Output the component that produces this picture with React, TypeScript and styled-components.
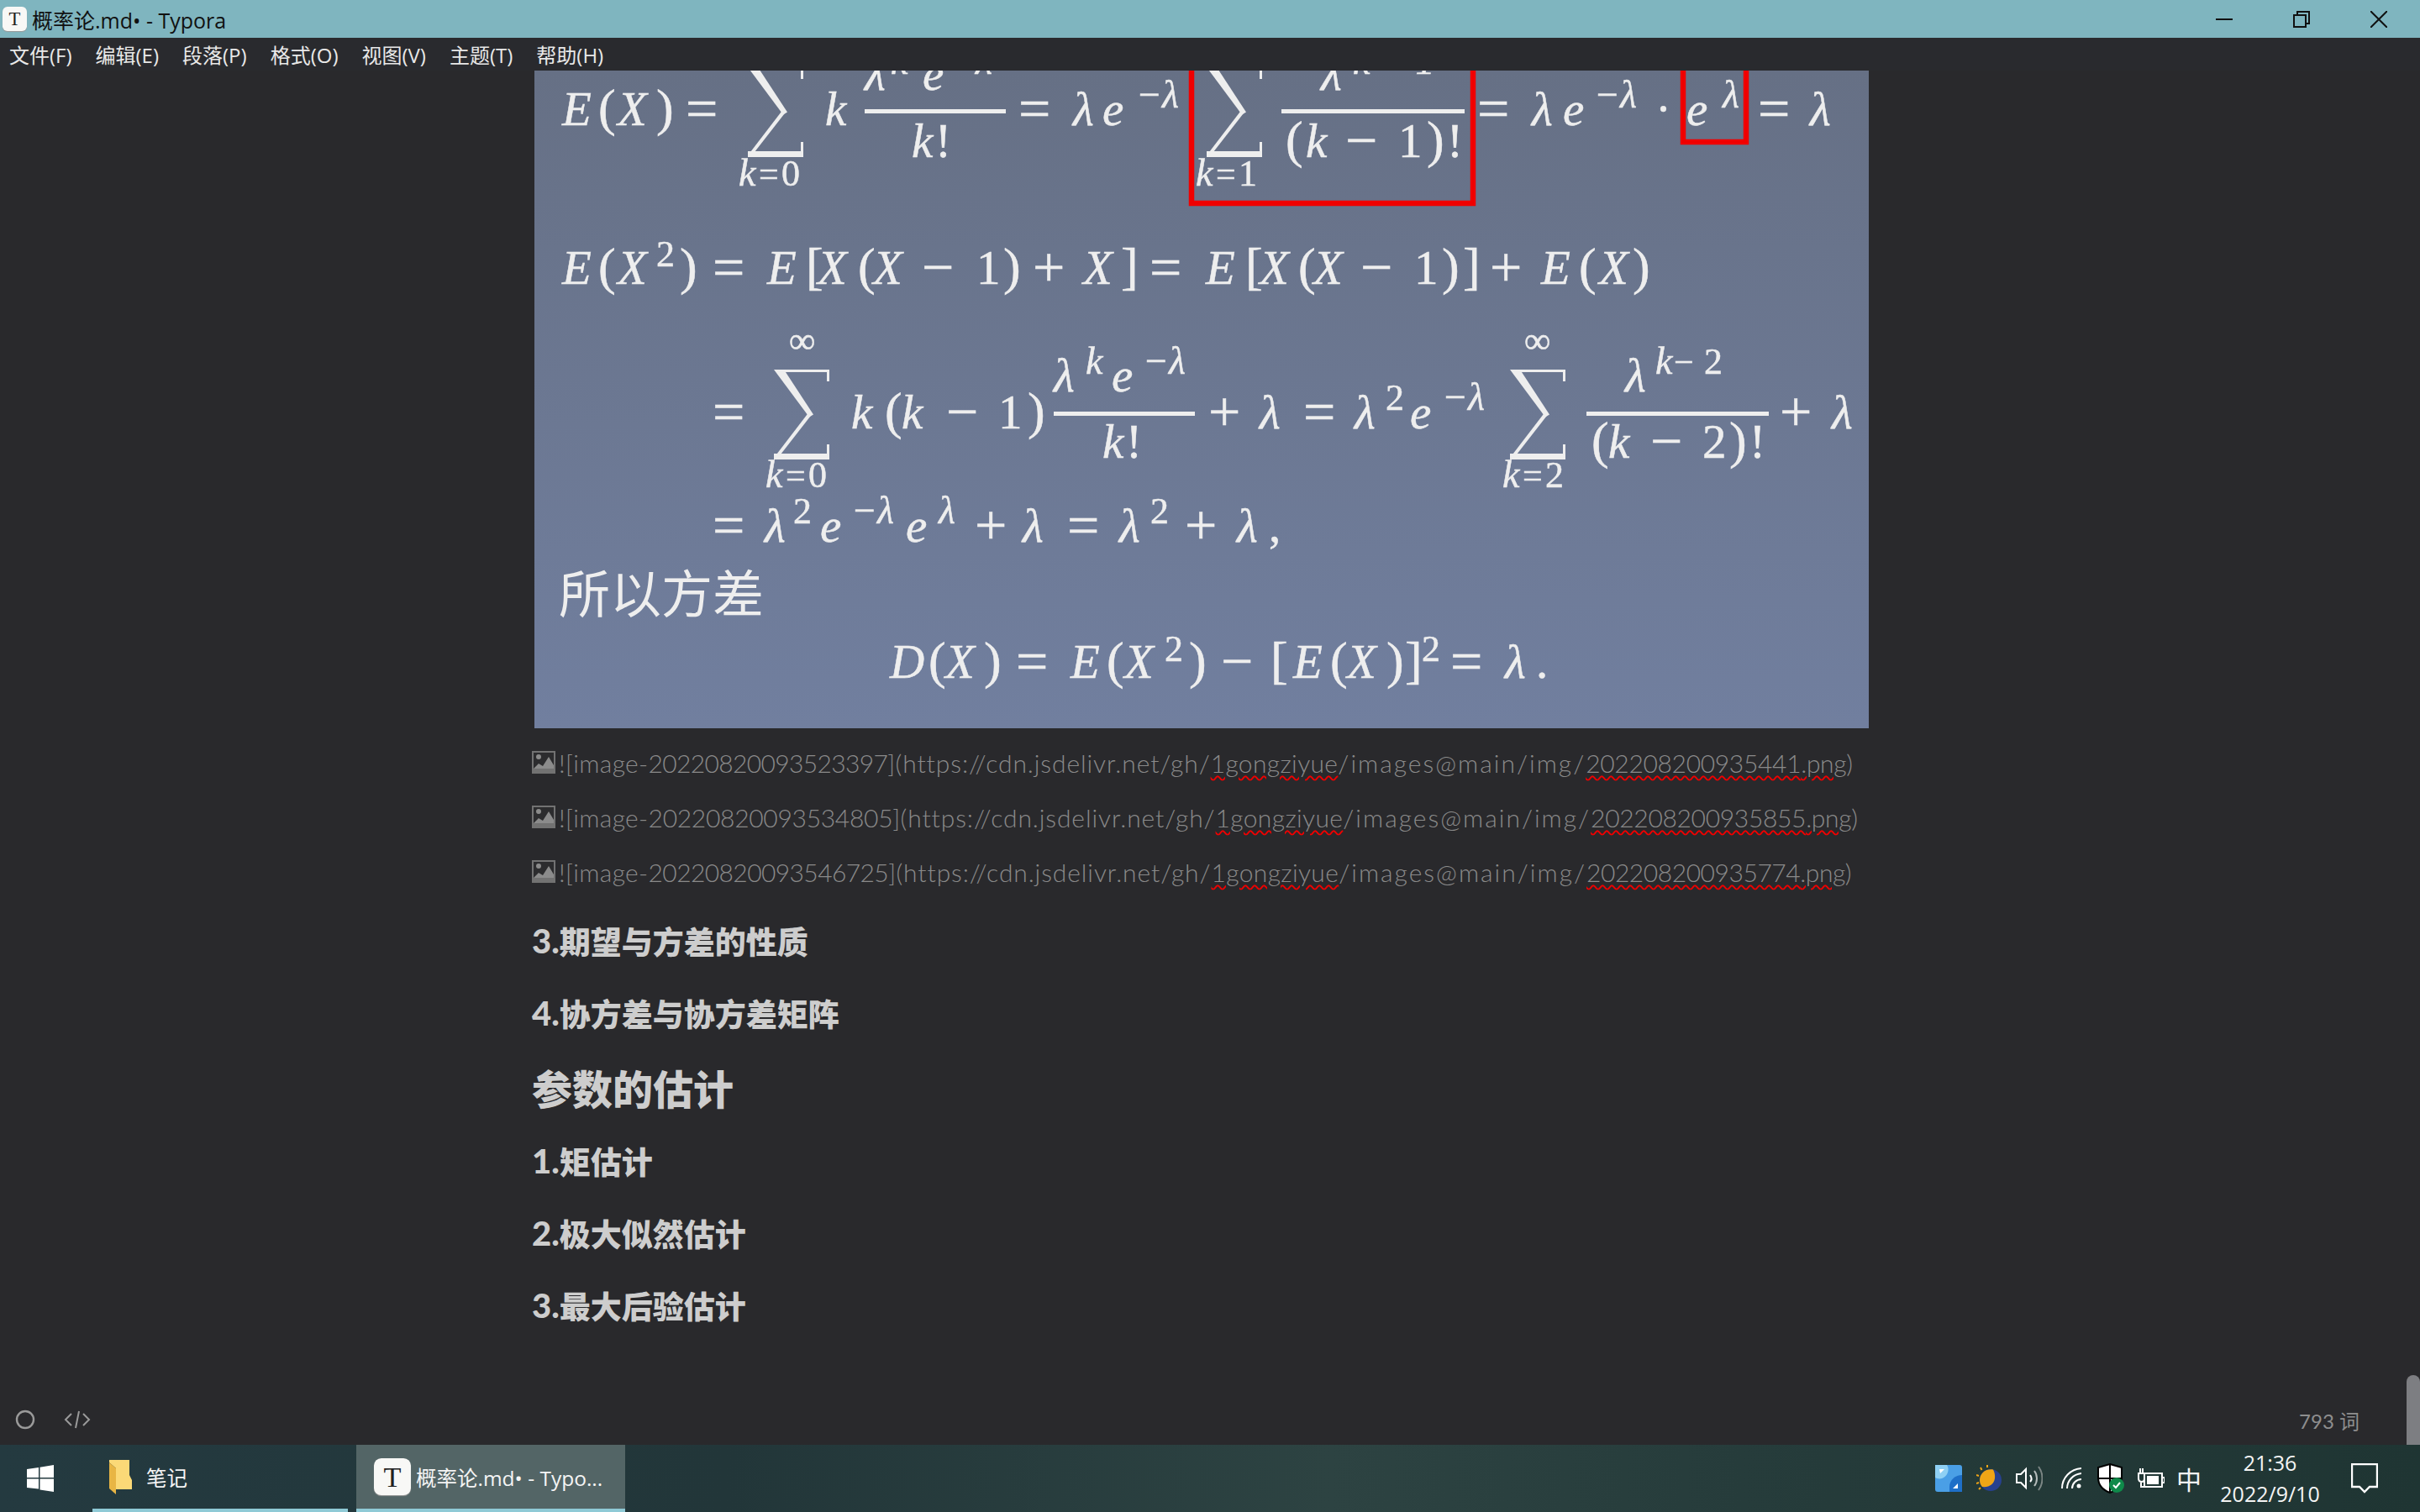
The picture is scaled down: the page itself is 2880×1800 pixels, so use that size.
import React from 'react';
import styled, { createGlobalStyle } from 'styled-components';

const CJK = '"Noto Sans CJK SC"';
const UI_FONT = `"Open Sans", ${CJK}, sans-serif`;
const DOC_FONT = `Lato, ${CJK}, sans-serif`;

const GlobalStyle = createGlobalStyle`
    html, body {
        margin: 0;
        padding: 0;
        background: #29292c;
    }
`;

const Screen = styled.div`
    width: 2880px;
    height: 1800px;
    display: flex;
    flex-direction: column;
    overflow: hidden;
    font-family: ${UI_FONT};
`;

const TitleBar = styled.header`
    height: 45px;
    flex: none;
    display: flex;
    align-items: center;
    padding-left: 3px;
    background: #7fb5bf;
    color: #111;
`;

const TitleText = styled.span`
    margin-left: 6px;
    font-size: 25px;
    flex: 1;
`;

const WindowButton = styled.div`
    width: 92px;
    height: 45px;
    display: flex;
    align-items: center;
    justify-content: center;
`;

const WindowButtons = styled.div`
    display: flex;
    padding-right: 3px;
`;

const MenuBar = styled.nav`
    height: 39px;
    flex: none;
    display: flex;
    align-items: center;
    gap: 28px;
    padding-left: 11px;
    background: #292a2e;
    color: #e8e8e8;
    font-size: 24px;
`;

const Body = styled.div`
    position: relative;
    flex: 1;
    min-height: 0;
    display: flex;
    flex-direction: column;
    background: #29292c;
`;

const Document = styled.main`
    flex: 1;
    min-height: 0;
    overflow: hidden;
    padding-left: 633px;
`;

const Figure = styled.svg`
    display: block;
    width: 1588px;
    height: 783px;
    margin-left: 3px;
    margin-bottom: 8px;
    filter: blur(0.5px);
`;

const MathText = styled.text<{ $size: number; $roman?: boolean }>`
    font-family: "Liberation Serif", serif;
    font-style: ${p => (p.$roman ? 'normal' : 'italic')};
    font-size: ${p => p.$size}px;
    fill: #eeeeee;
    stroke: #eeeeee;
    stroke-width: 0.5px;
`;

const FigureCaption = styled.text`
    font-family: ${CJK}, sans-serif;
    font-size: 61px;
    font-weight: 400;
    fill: #eeeeee;
`;

const SourceLine = styled.p`
    height: 65px;
    margin: 0;
    display: flex;
    align-items: center;
    gap: 4px;
    white-space: pre;
    font-family: ${DOC_FONT};
    font-weight: 300;
    font-size: 30px;
    letter-spacing: 0.35px;
    color: #8a8a8a;
`;

const Spaced = styled.span<{ $spacing: number }>`
    letter-spacing: ${p => p.$spacing}px;
`;

const Misspelled = styled.span<{ $spacing?: number }>`
    letter-spacing: ${p => p.$spacing ?? 0.35}px;
    text-decoration: underline wavy #f00000 2px;
    text-underline-offset: 3px;
`;

const Sections = styled.section`
    margin-top: 7px;
`;

const Heading = styled.h3<{ $large?: boolean }>`
    margin: 0;
    height: ${p => (p.$large ? 90 : 86)}px;
    display: flex;
    align-items: center;
    font-family: ${DOC_FONT};
    font-size: ${p => (p.$large ? 48 : 37)}px;
    font-weight: 900;
    color: #cdcdcd;
`;

const HeadingNumber = styled.span`
    font-size: 40px;
`;

const StatusBar = styled.footer`
    height: 60px;
    flex: none;
    display: flex;
    align-items: center;
    gap: 34px;
    padding: 0 72px 0 18px;
    background: #29292c;
`;

const WordCount = styled.span`
    margin-left: auto;
    font-family: Lato, ${CJK}, sans-serif;
    font-size: 24px;
    color: #8e8e8e;
`;

const ScrollThumb = styled.div`
    position: absolute;
    right: 0;
    bottom: 0;
    width: 16px;
    height: 83px;
    border-radius: 8px 8px 0 0;
    background: #7d7e82;
`;

const Taskbar = styled.footer`
    height: 80px;
    flex: none;
    display: flex;
    align-items: stretch;
    background: linear-gradient(90deg, #243a40 0%, #223639 30%, #2d4342 55%, #263c3b 72%, #1f3533 100%);
    color: #f4f4f4;
    font-size: 24.5px;
`;

const StartButton = styled.div`
    width: 110px;
    flex: none;
    display: flex;
    align-items: center;
    padding-left: 32px;
    box-sizing: border-box;
`;

const TaskItem = styled.div<{ $active?: boolean; $width: number }>`
    width: ${p => p.$width}px;
    flex: none;
    box-sizing: border-box;
    display: flex;
    align-items: center;
    gap: ${p => (p.$active ? 6 : 17)}px;
    padding-left: ${p => (p.$active ? 21 : 20)}px;
    margin-right: 10px;
    border-bottom: 4px solid #8fcad6;
    background: ${p => (p.$active ? '#536566' : 'transparent')};
    white-space: pre;
`;

const Tray = styled.div`
    margin-left: auto;
    display: flex;
    align-items: center;
    padding-right: 50px;
`;

const TrayIcon = styled.svg<{ $gap: number }>`
    flex: none;
    margin-right: ${p => p.$gap}px;
`;

const ImeLabel = styled.span`
    font-family: ${CJK}, sans-serif;
    font-size: 30px;
    margin-right: 23px;
`;

const Clock = styled.div`
    width: 117px;
    display: flex;
    flex-direction: column;
    align-items: center;
    font-size: 25px;
    line-height: 37px;
    margin-right: 38px;
`;

const LogoTile = styled.div<{ $size: number }>`
    width: ${p => p.$size}px;
    height: ${p => p.$size}px;
    flex: none;
    display: flex;
    align-items: center;
    justify-content: center;
    border-radius: ${p => p.$size * 0.2}px;
    background: #f8f8f6;
    box-shadow: 0 1px 1px #999;
    color: #222;
    font-family: "Liberation Serif", serif;
    font-size: ${p => p.$size * 0.78}px;
`;

type Run = [number, number, string, ('s' | 'r' | 'rs')?];

// glyph runs of the pasted formula picture, in page coordinates
const RUNS: Run[] = [
    [669, 149, 'E'], [712, 149, '(', 'r'], [735, 149, 'X'], [781, 149, ')', 'r'], [818, 149, '=', 'r'],
    [982, 149, 'k'], [1029, 107, 'λ'], [1060, 88, 'k', 's'], [1098, 107, 'e'], [1130, 88, '−λ', 's'],
    [1085, 187, 'k'], [1113, 187, '!', 'r'], [879, 221, 'k', 's'], [903, 221, '=', 'rs'], [930, 221, '0', 'rs'],
    [1214, 149, '=', 'r'], [1277, 149, 'λ'], [1312, 149, 'e'], [1352, 128, '−λ', 's'],
    [1423, 221, 'k', 's'], [1447, 221, '=', 'rs'], [1474, 221, '1', 'rs'],
    [1572, 107, 'λ'], [1610, 88, 'k − 1', 's'],
    [1530, 187, '(', 'r'], [1554, 187, 'k'], [1603, 187, '−', 'r'], [1664, 187, '1', 'r'], [1698, 187, ')', 'r'], [1722, 187, '!', 'r'],
    [1760, 149, '=', 'r'], [1823, 149, 'λ'], [1860, 149, 'e'], [1897, 128, '−λ', 's'], [1970, 149, '·', 'r'],
    [2007, 149, 'e'], [2050, 128, 'λ', 's'], [2094, 149, '=', 'r'], [2154, 149, 'λ'],

    [669, 338, 'E'], [712, 338, '(', 'r'], [735, 338, 'X'], [781, 317, '2', 'rs'], [809, 338, ')', 'r'], [850, 338, '=', 'r'],
    [913, 338, 'E'], [959, 338, '[', 'r'], [973, 338, 'X'], [1021, 338, '(', 'r'], [1039, 338, 'X'], [1099, 338, '−', 'r'],
    [1162, 338, '1', 'r'], [1194, 338, ')', 'r'], [1231, 338, '+', 'r'], [1289, 338, 'X'], [1334, 338, ']', 'r'], [1370, 338, '=', 'r'],
    [1435, 338, 'E'], [1482, 338, '[', 'r'], [1499, 338, 'X'], [1545, 338, '(', 'r'], [1563, 338, 'X'], [1621, 338, '−', 'r'],
    [1683, 338, '1', 'r'], [1716, 338, ')', 'r'], [1741, 338, ']', 'r'], [1775, 338, '+', 'r'], [1834, 338, 'E'], [1879, 338, '(', 'r'],
    [1903, 338, 'X'], [1943, 338, ')', 'r'],

    [850, 510, '=', 'r'], [939, 420, '∞', 'rs'], [911, 580, 'k', 's'], [935, 580, '=', 'rs'], [962, 580, '0', 'rs'],
    [1013, 510, 'k'], [1053, 510, '(', 'r'], [1073, 510, 'k'], [1128, 510, '−', 'r'], [1188, 510, '1', 'r'], [1223, 510, ')', 'r'],
    [1254, 466, 'λ'], [1292, 445, 'k', 's'], [1323, 466, 'e'], [1360, 445, '−λ', 's'], [1312, 545, 'k'], [1340, 545, '!', 'r'],
    [1440, 510, '+', 'r'], [1499, 510, 'λ'], [1553, 510, '=', 'r'], [1612, 510, 'λ'], [1649, 488, '2', 'rs'], [1678, 510, 'e'],
    [1716, 488, '−λ', 's'], [1814, 420, '∞', 'rs'], [1788, 580, 'k', 's'], [1812, 580, '=', 'rs'], [1839, 580, '2', 'rs'],
    [1934, 466, 'λ'], [1970, 445, 'k', 's'], [1992, 445, '−', 'rs'], [2028, 445, '2', 'rs'],
    [1894, 545, '(', 'r'], [1914, 545, 'k'], [1966, 545, '−', 'r'], [2026, 545, '2', 'r'], [2058, 545, ')', 'r'], [2082, 545, '!', 'r'],
    [2120, 510, '+', 'r'], [2180, 510, 'λ'],

    [850, 645, '=', 'r'], [910, 645, 'λ'], [944, 623, '2', 'rs'], [976, 645, 'e'], [1013, 623, '−λ', 's'], [1078, 645, 'e'],
    [1117, 623, 'λ', 's'], [1162, 645, '+', 'r'], [1217, 645, 'λ'], [1272, 645, '=', 'r'], [1332, 645, 'λ'], [1369, 623, '2', 'rs'],
    [1412, 645, '+', 'r'], [1472, 645, 'λ'], [1510, 645, ',', 'r'],

    [1059, 807, 'D'], [1105, 807, '(', 'r'], [1125, 807, 'X'], [1171, 807, ')', 'r'], [1211, 807, '=', 'r'], [1274, 807, 'E'],
    [1317, 807, '(', 'r'], [1338, 807, 'X'], [1386, 787, '2', 'rs'], [1415, 807, ')', 'r'], [1455, 807, '−', 'r'], [1512, 807, '[', 'r'],
    [1539, 807, 'E'], [1583, 807, '(', 'r'], [1603, 807, 'X'], [1650, 807, ')', 'r'], [1672, 807, ']', 'r'], [1692, 787, '2', 'rs'],
    [1728, 807, '=', 'r'], [1791, 807, 'λ'], [1828, 807, '.', 'r'],
];

// operators and fences sit larger than the letters in Cambria Math
const glyphMetrics = (text: string, kind?: string) => {
    const isOperator = '=+−'.includes(text);
    const isFence = '()[]'.includes(text);
    if (kind === 'rs') return { size: isOperator ? 42 : 44, dx: 0, dy: 0 };
    if (kind === 's') return { size: 46, dx: 0, dy: 0 };
    if (isOperator) return { size: 68, dx: -2, dy: 3 };
    if (isFence) return { size: 62, dx: 0, dy: 0 };
    return { size: 57, dx: 0, dy: 0 };
};

const SIGMAS = [
    { x: 890, top: 80, bottom: 187 },
    { x: 1436, top: 80, bottom: 187 },
    { x: 921, top: 440, bottom: 547 },
    { x: 1797, top: 440, bottom: 547 },
];

const FRACTIONS = [
    [1029, 1197, 133],
    [1525, 1743, 133],
    [1254, 1422, 493],
    [1888, 2105, 493],
];

const Sigma = ({ x, top, bottom }: { x: number; top: number; bottom: number }) => {
    const mid = (top + bottom) / 2;
    return (
        <g fill="#eeeeee">
            <polygon points={`${x},${top} ${x + 12},${top} ${x + 47},${mid} ${x + 42},${mid + 3}`} />
            <polygon points={`${x + 41},${mid - 2} ${x + 45},${mid} ${x + 8},${bottom - 6} ${x},${bottom - 2}`} />
            <rect x={x} y={bottom - 7} width={66} height={7} />
            <rect x={x + 2} y={top} width={64} height={3} />
            <rect x={x + 63} y={top} width={3} height={14} />
            <rect x={x + 63} y={bottom - 18} width={3} height={14} />
        </g>
    );
};

const FormulaImage = () => (
    <Figure viewBox="636 84 1588 783" xmlns="http://www.w3.org/2000/svg">
        <defs>
            <linearGradient id="plate" x1="0" y1="0" x2="0" y2="1">
                <stop offset="0" stopColor="#667085" />
                <stop offset="1" stopColor="#717f9f" />
            </linearGradient>
        </defs>
        <rect x="636" y="84" width="1588" height="783" fill="url(#plate)" />
        {SIGMAS.map(s => (
            <Sigma key={`${s.x}-${s.top}`} {...s} />
        ))}
        {FRACTIONS.map(([x1, x2, y]) => (
            <rect key={`${x1}-${y}`} x={x1} y={y - 3} width={x2 - x1} height={5} fill="#eeeeee" />
        ))}
        {RUNS.map(([x, y, text, kind], i) => {
            const { size, dx, dy } = glyphMetrics(text, kind);
            return (
                <MathText key={i} x={x + dx} y={y + dy} $size={size} $roman={kind === 'r' || kind === 'rs'}>
                    {text}
                </MathText>
            );
        })}
        <FigureCaption x="665" y="730">所以方差</FigureCaption>
        <g fill="none" stroke="#f00000" strokeWidth="6.5">
            <path d="M1418 84V242H1753V84" />
            <path d="M2003 84V169H2078V84" />
        </g>
    </Figure>
);

const BrokenImageIcon = () => (
    <svg width="28" height="27" viewBox="0 0 28 27" style={{ flex: 'none' }}>
        <rect width="28" height="27" fill="#727272" />
        <rect x="2" y="2" width="24" height="19" fill="#2c2c2e" />
        <circle cx="8" cy="7" r="3" fill="#8b8b8b" />
        <path d="M2 21l6-6 5 3 7-11 6 10v4z" fill="#8b8b8b" />
    </svg>
);

const SOURCES = [
    { name: '20220820093523397', file: '202208200935441', nameSpacing: -0.65, fileSpacing: -0.33 },
    { name: '20220820093534805', file: '202208200935855', nameSpacing: -0.3, fileSpacing: -0.33 },
    { name: '20220820093546725', file: '202208200935774', nameSpacing: -0.6, fileSpacing: -0.45 },
];

const HEADINGS: { number?: string; text: string; large?: boolean }[] = [
    { number: '3.', text: '期望与方差的性质' },
    { number: '4.', text: '协方差与协方差矩阵' },
    { text: '参数的估计', large: true },
    { number: '1.', text: '矩估计' },
    { number: '2.', text: '极大似然估计' },
    { number: '3.', text: '最大后验估计' },
];

const MENUS = ['文件(F)', '编辑(E)', '段落(P)', '格式(O)', '视图(V)', '主题(T)', '帮助(H)'];

const App = () => (
    <Screen>
        <GlobalStyle />
        <TitleBar>
            <LogoTile $size={29}>T</LogoTile>
            <TitleText>概率论.md• - Typora</TitleText>
            <WindowButtons>
                <WindowButton>
                    <svg width="20" height="20" viewBox="0 0 20 20">
                        <rect y="9" width="20" height="2" fill="#111" />
                    </svg>
                </WindowButton>
                <WindowButton>
                    <svg width="20" height="20" viewBox="0 0 20 20" fill="none" stroke="#111" strokeWidth="2">
                        <rect x="1" y="5" width="14" height="14" />
                        <path d="M5 5V1h14v14h-4" />
                    </svg>
                </WindowButton>
                <WindowButton>
                    <svg width="20" height="20" viewBox="0 0 20 20" stroke="#111" strokeWidth="2">
                        <path d="M0 0L20 20M20 0L0 20" />
                    </svg>
                </WindowButton>
            </WindowButtons>
        </TitleBar>
        <MenuBar>
            {MENUS.map(m => (
                <span key={m}>{m}</span>
            ))}
        </MenuBar>
        <Body>
            <Document>
                <FormulaImage />
                {SOURCES.map(({ name, file, nameSpacing, fileSpacing }) => (
                    <SourceLine key={name}>
                        <BrokenImageIcon />
                        <span>
                            ![image-<Spaced $spacing={nameSpacing}>{name}</Spaced>]
                            <Spaced $spacing={0.9}>(https://cdn.jsdelivr.net/gh/</Spaced>
                            <Misspelled>1gongziyue</Misspelled>
                            <Spaced $spacing={2}>/images@main/img/</Spaced>
                            <Misspelled $spacing={fileSpacing}>{file}.png</Misspelled>)
                        </span>
                    </SourceLine>
                ))}
                <Sections>
                    {HEADINGS.map(h => (
                        <Heading key={h.text} $large={h.large}>
                            {h.number && <HeadingNumber>{h.number}</HeadingNumber>}
                            {h.text}
                        </Heading>
                    ))}
                </Sections>
            </Document>
            <StatusBar>
                <svg width="24" height="24" viewBox="0 0 24 24" fill="none" stroke="#9a9a9a" strokeWidth="2.4">
                    <circle cx="12" cy="12" r="10" />
                </svg>
                <svg width="32" height="24" viewBox="0 0 32 24" fill="none" stroke="#9a9a9a" strokeWidth="2">
                    <path d="M9 5L2 12l7 7M23 5l7 7-7 7M18 2l-4 20" />
                </svg>
                <WordCount>793 词</WordCount>
            </StatusBar>
            <ScrollThumb />
        </Body>
        <Taskbar>
            <StartButton>
                <svg width="32" height="32" viewBox="0 0 32 32" fill="#ffffff">
                    <path d="M0 5l14-2v12H0zM15.5 2.8L32 0v15H15.5zM0 16.5h14v12L0 27zM15.5 16.5H32V32l-16.5-2.6z" />
                </svg>
            </StartButton>
            <TaskItem $width={304}>
                <svg width="27" height="41" viewBox="0 0 27 41">
                    <path d="M0 0H24V18L27 24V35H8V10L0 3z" fill="#fbd977" />
                    <path d="M0 3L8 10V41L0 34z" fill="#e8b544" />
                </svg>
                笔记
            </TaskItem>
            <TaskItem $active $width={320}>
                <LogoTile $size={44}>T</LogoTile>
                概率论.md• - Typo...
            </TaskItem>
            <Tray>
                <TrayIcon $gap={17} width="32" height="32" viewBox="0 0 32 32">
                    <rect width="32" height="32" rx="3" fill="#4a9fe6" />
                    <path d="M0 0h14c4 6 0 14-6 16-3 1-6 0-8-1z" fill="#8fd0f4" />
                    <path d="M32 12c-8 0-15 6-15 14v6h15z" fill="#1e6fc8" />
                    <path d="M5 5h6l-5 5zM27 22v6h-6z" fill="#ffffff" />
                </TrayIcon>
                <TrayIcon $gap={17} width="30" height="32" viewBox="0 0 30 32">
                    <path d="M5 3l1.5 3M0 12l3 1M0 22l3-1M3 29l2-2M13 0v3" stroke="#f0a516" strokeWidth="2" />
                    <circle cx="17" cy="18" r="13" fill="#27418f" />
                    <path d="M20 5.4C10 4 4 11 4 18c0 3 1 6 3 8 8 1 14-3 15-10 .5-4-.5-8-2-10.600z" fill="#f0a516" />
                </TrayIcon>
                <TrayIcon $gap={22} width="32" height="30" viewBox="0 0 32 30" fill="none" strokeWidth="2">
                    <path d="M1 10h5l6-6v22l-6-6H1z" stroke="#fff" />
                    <path d="M17 11c2 3 2 6 0 8" stroke="#fff" />
                    <path d="M22 6c4 5 4 13 0 18" stroke="#b5bcbb" />
                    <path d="M27 1c6 8 6 20 0 28" stroke="#7d8785" />
                </TrayIcon>
                <TrayIcon $gap={19} width="24" height="26" viewBox="0 0 24 26" fill="none" stroke="#fff" strokeWidth="2">
                    <path d="M1 25C1 12 11 2 24 1" />
                    <path d="M7 25C7 16 14 8 24 7" />
                    <path d="M13 25c0-6 5-11 11-11" />
                    <circle cx="21" cy="22" r="2.500" fill="#fff" stroke="none" />
                </TrayIcon>
                <TrayIcon $gap={16} width="32" height="36" viewBox="0 0 32 36">
                    <path d="M15 1l14 4v12c0 9-6 15-14 18C7 32 1 26 1 17V5z" fill="#fff" stroke="#000" strokeWidth="2" />
                    <path d="M15 1v34M1 18h28" stroke="#000" strokeWidth="2" />
                    <circle cx="23" cy="26" r="9" fill="#0f8a4a" />
                    <path d="M19 26l3 3 5-6" fill="none" stroke="#fff" strokeWidth="2" />
                </TrayIcon>
                <TrayIcon $gap={14} width="32" height="24" viewBox="0 0 32 24" fill="none" stroke="#fff" strokeWidth="2">
                    <rect x="8" y="6" width="21" height="16" />
                    <rect x="11" y="9" width="14" height="10" fill="#fff" stroke="none" />
                    <path d="M30 11h2v6h-2" />
                    <path d="M1 6v6c0 3 2 4 4 4s3-1 3-4V6zM3 0v6M6 0v6M4 16v6h4" />
                </TrayIcon>
                <ImeLabel>中</ImeLabel>
                <Clock>
                    <span>21:36</span>
                    <span>2022/9/10</span>
                </Clock>
                <svg width="32" height="36" viewBox="0 0 32 36" fill="none" stroke="#fff" strokeWidth="2.4">
                    <path d="M1 1h30v27h-9l-6 6-6-6H1z" />
                </svg>
            </Tray>
        </Taskbar>
    </Screen>
);

export default App;
